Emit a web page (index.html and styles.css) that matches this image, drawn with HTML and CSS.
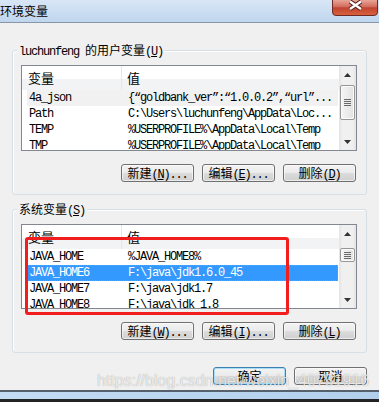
FILE: index.html
```html
<!DOCTYPE html>
<html lang="zh-CN">
<head>
    <meta charset="UTF-8">
    <title>环境变量</title>
    <link rel="stylesheet" href="styles.css">
</head>
<body>
    <div class="window">
        <div class="titlebar">
            <span class="title">环境变量</span>
            <span class="close">
                <svg width="46" height="16" viewBox="0 0 46 16">
                    <defs>
                        <linearGradient id="closeGrad" x1="0" y1="0" x2="0" y2="1">
                            <stop offset="0" stop-color="#e8a496"/>
                            <stop offset="0.45" stop-color="#d06a5b"/>
                            <stop offset="0.5" stop-color="#c1432f"/>
                            <stop offset="1" stop-color="#d8633f"/>
                        </linearGradient>
                    </defs>
                    <path d="M0.5 0 V12 Q0.5 15.5 4 15.5 H42 Q45.5 15.5 45.5 12 V0" fill="url(#closeGrad)" stroke="#6e2b24"/>
                    <path d="M18 1.5 L29 9 M29 1.5 L18 9" stroke="#4b1f1a" stroke-width="4.4"/>
                    <path d="M18 1.5 L29 9 M29 1.5 L18 9" stroke="#fff" stroke-width="2.4"/>
                </svg>
            </span>
        </div>

        <div class="content">
            <div class="group group-user">
                <div class="group-title"><span class="mono">luchunfeng </span>的用户变量<span class="mono">(<u>U</u>)</span></div>
                <div class="list">
                    <div class="list-main">
                        <div class="list-head">
                            <div class="col-name">变量</div>
                            <div class="col-value">值</div>
                        </div>
                        <div class="rows mono">
                            <div class="row focus"><span class="cell-name">4a_json</span><span>{“goldbank_ver”:“1.0.0.2”,“url”...</span></div>
                            <div class="row"><span class="cell-name">Path</span><span>C:\Users\luchunfeng\AppData\Loc...</span></div>
                            <div class="row"><span class="cell-name">TEMP</span><span>%USERPROFILE%\AppData\Local\Temp</span></div>
                            <div class="row"><span class="cell-name">TMP</span><span>%USERPROFILE%\AppData\Local\Temp</span></div>
                        </div>
                    </div>
                    <div class="scrollbar">
                        <div class="sb-btn"><svg width="7" height="4"><path d="M0 4 L3.5 0 L7 4z"/></svg></div>
                        <div class="sb-track"><div class="sb-thumb thumb-user"><span class="grip"></span></div></div>
                        <div class="sb-btn"><svg width="7" height="4"><path d="M0 0 L3.5 4 L7 0z"/></svg></div>
                    </div>
                </div>
                <div class="buttons">
                    <div class="btn">新建<span class="mono">(<u>N</u>)...</span></div>
                    <div class="btn">编辑<span class="mono">(<u>E</u>)...</span></div>
                    <div class="btn">删除<span class="mono">(<u>D</u>)</span></div>
                </div>
            </div>

            <div class="group group-system">
                <div class="group-title">系统变量<span class="mono">(<u>S</u>)</span></div>
                <div class="list list-system">
                    <div class="list-main">
                        <div class="list-head">
                            <div class="col-name">变量</div>
                            <div class="col-value">值</div>
                        </div>
                        <div class="rows mono">
                            <div class="row"><span class="cell-name">JAVA_HOME</span><span>%JAVA_HOME8%</span></div>
                            <div class="row selected"><span class="cell-name">JAVA_HOME6</span><span>F:\java\jdk1.6.0_45</span></div>
                            <div class="row"><span class="cell-name">JAVA_HOME7</span><span>F:\java\jdk1.7</span></div>
                            <div class="row"><span class="cell-name">JAVA_HOME8</span><span>F:\java\jdk_1.8</span></div>
                        </div>
                    </div>
                    <div class="scrollbar">
                        <div class="sb-btn"><svg width="7" height="4"><path d="M0 4 L3.5 0 L7 4z"/></svg></div>
                        <div class="sb-track"><div class="sb-thumb thumb-system"><span class="grip"></span></div></div>
                        <div class="sb-btn"><svg width="7" height="4"><path d="M0 0 L3.5 4 L7 0z"/></svg></div>
                    </div>
                </div>
                <div class="buttons">
                    <div class="btn">新建<span class="mono">(<u>W</u>)...</span></div>
                    <div class="btn">编辑<span class="mono">(<u>I</u>)...</span></div>
                    <div class="btn">删除<span class="mono">(<u>L</u>)</span></div>
                </div>
            </div>
        </div>

        <div class="footer">
            <div class="btn default">确定</div>
            <div class="btn">取消</div>
        </div>

        <div class="frame-bottom"></div>

        <div class="mark-box"></div>
        <div class="watermark">https://blog.csdn.net/weixin_40751916</div>
    </div>
</body>
</html>
```

FILE: styles.css
```css
body {
    margin: 0;
    background: #f0f0f0;
    font-family: "Noto Sans CJK SC", sans-serif;
}
.window {
    position: relative;
    width: 379px;
    height: 402px;
    background: #f0f0f0;
    display: flex;
    flex-direction: column;
    overflow: hidden;
    font-size: 12px;
    color: #000;
}
.mono {
    font-family: "Liberation Mono", "Noto Sans CJK SC", monospace;
    font-size: 12px;
    letter-spacing: -1.2px;
}

/* title bar */
.titlebar {
    height: 22px;
    flex-shrink: 0;
    display: flex;
    align-items: flex-start;
    border-bottom: 1px solid #8797a9;
    background: linear-gradient(#d8e6f5, #bfd6ee);
}
.title {
    font-size: 12px;
    line-height: 14px;
    padding-top: 4px;
}
.close {
    margin-left: auto;
    margin-right: 1px;
    height: 16px;
}

/* group boxes */
.content {
    padding: 0 12px;
}
.group {
    border: 1px solid #d5dfe5;
    border-radius: 3px;
    box-shadow: inset 1px 1px 0 #fff;
    padding: 0 9px 12px 8px;
}
.group-user {
    margin-top: 27px;
}
.group-system {
    margin-top: 14px;
}
.group-title {
    width: fit-content;
    margin: -8px 0 6px -4px;
    padding: 0 2px;
    line-height: 14px;
    background: #f0f0f0;
}

/* list views */
.list {
    height: 86px;
    box-sizing: border-box;
    border: 1px solid #828790;
    background: #fff;
    display: flex;
}
.list-system {
    height: 85px;
}
.list-main {
    flex: 1;
    min-width: 0;
    overflow: hidden;
}
.list-head {
    height: 24px;
    display: flex;
    background: linear-gradient(#fff 55%, #f2f3f5 55%);
    font-size: 13px;
    line-height: 24px;
}
.col-name {
    width: 100px;
    box-sizing: border-box;
    padding-left: 6px;
    border-right: 1px solid #e3e6ea;
}
.col-value {
    padding-left: 5px;
}
.rows {
    padding: 0 1px 0 5px;
}
.row {
    height: 16px;
    line-height: 16px;
    display: flex;
    padding-left: 2px;
    white-space: nowrap;
}
.cell-name {
    width: 99px;
    flex-shrink: 0;
}
.row.focus {
    background: #f1f1f1;
}
.row.selected {
    background: #3399ff;
    color: #fff;
    outline: 1px dotted #d48a3a;
    outline-offset: -1px;
}

/* scrollbar */
.scrollbar {
    width: 17px;
    flex-shrink: 0;
    display: flex;
    flex-direction: column;
    background: linear-gradient(to right, #e4e4e4, #f0f0f0 20%, #f0f0f0 80%, #e4e4e4);
}
.sb-btn {
    height: 17px;
    display: flex;
    align-items: center;
    justify-content: center;
}
.sb-btn path {
    fill: #333;
}
.sb-track {
    flex: 1;
    padding: 0 1px;
}
.sb-thumb {
    box-sizing: border-box;
    border: 1px solid #979797;
    border-radius: 2px;
    background: linear-gradient(to right, #f5f5f5, #e2e2e2);
    box-shadow: inset 0 0 0 1px #fbfbfb;
    display: flex;
    align-items: center;
    justify-content: center;
}
.thumb-user {
    height: 35px;
    margin-top: 2px;
}
.thumb-system {
    height: 14px;
    margin-top: 6px;
}
.grip {
    width: 7px;
    height: 7px;
    background: repeating-linear-gradient(#6a6a6a 0 1px, transparent 1px 2px);
}

/* buttons */
.buttons {
    display: flex;
    justify-content: flex-end;
    gap: 8px;
    margin: 13px 1px 0 0;
}
.btn {
    width: 73px;
    height: 18px;
    box-sizing: border-box;
    border: 1px solid #707070;
    border-radius: 3px;
    background: linear-gradient(#f3f3f3, #ebebeb 48%, #dcdcdc 52%, #cfcfcf);
    box-shadow: inset 0 0 0 1px rgba(255, 255, 255, 0.6);
    font-size: 12px;
    line-height: 16px;
    text-align: center;
    white-space: nowrap;
}
.btn.default {
    border-color: #3c7fb1;
    box-shadow: inset 0 0 0 1px #a9dcf5;
}
.footer {
    display: flex;
    justify-content: flex-end;
    gap: 8px;
    margin-top: 14px;
    padding: 0 12px;
}

/* bottom window frame */
.frame-bottom {
    margin-top: auto;
    height: 7px;
    border-top: 2px solid #56616e;
    border-bottom: 3px solid #232323;
    background: linear-gradient(to right, #c3dcf4, #b2cfec);
}

/* overlays */
.mark-box {
    position: absolute;
    left: 25px;
    top: 237px;
    width: 264px;
    height: 78px;
    box-sizing: border-box;
    border: 3px solid #f21d1d;
    border-radius: 3px;
}
.watermark {
    position: absolute;
    left: 97px;
    top: 372px;
    font-family: "Liberation Sans", sans-serif;
    font-size: 16px;
    color: rgba(255, 255, 255, 0.8);
    text-shadow: 0 0 1px rgba(0, 0, 0, 0.4);
    white-space: nowrap;
}
```
